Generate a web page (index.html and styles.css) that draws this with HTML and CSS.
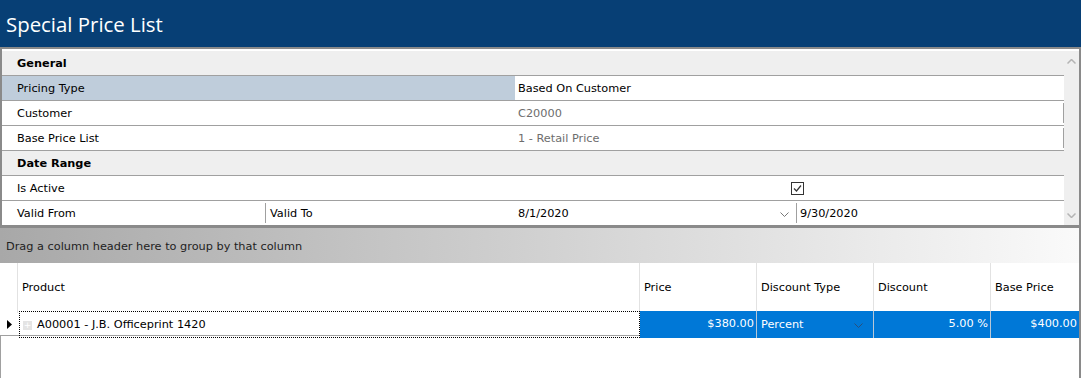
FILE: index.html
```html
<!DOCTYPE html>
<html lang="en">
<head>
    <meta charset="UTF-8">
    <title>Special Price List</title>
    <link rel="stylesheet" href="styles.css">
</head>
<body>
    <div class="titlebar">Special Price List</div>

    <div class="props">
        <div class="props-rows">
            <div class="cat">General</div>
            <div class="row">
                <div class="label selected">Pricing Type</div>
                <div class="value">Based On Customer</div>
            </div>
            <div class="row">
                <div class="label">Customer</div>
                <div class="value readonly">C20000</div>
            </div>
            <div class="row">
                <div class="label">Base Price List</div>
                <div class="value readonly">1 - Retail Price</div>
            </div>
            <div class="cat">Date Range</div>
            <div class="row">
                <div class="label">Is Active</div>
                <div class="value check-cell">
                    <svg class="checkbox" width="13" height="13" viewBox="0 0 13 13">
                        <rect x="0.5" y="0.5" width="12" height="12" fill="#fff" stroke="#333"/>
                        <path d="M3 6.5 L5.5 9 L10 3.5" fill="none" stroke="#333" stroke-width="1.2"/>
                    </svg>
                </div>
            </div>
            <div class="row last">
                <div class="label half">Valid From</div>
                <div class="label half sep">Valid To</div>
                <div class="value date">
                    <span>8/1/2020</span>
                    <svg class="chev" width="9" height="5" viewBox="0 0 9 5">
                        <path d="M0.5 0.5 L4.5 4.5 L8.5 0.5" fill="none" stroke="#777"/>
                    </svg>
                </div>
                <div class="value date-to">9/30/2020</div>
            </div>
        </div>
        <div class="vscroll">
            <svg width="9" height="5" viewBox="0 0 9 5"><path d="M0.5 4.5 L4.5 0.5 L8.5 4.5" fill="none" stroke="#b4b4b4" stroke-width="1.5"/></svg>
            <svg width="9" height="5" viewBox="0 0 9 5"><path d="M0.5 0.5 L4.5 4.5 L8.5 0.5" fill="none" stroke="#b4b4b4" stroke-width="1.5"/></svg>
        </div>
    </div>

    <div class="grid">
        <div class="group-panel">Drag a column header here to group by that column</div>

        <div class="grid-head">
            <div class="col indicator"></div>
            <div class="col">Product</div>
            <div class="col">Price</div>
            <div class="col">Discount Type</div>
            <div class="col">Discount</div>
            <div class="col">Base Price</div>
        </div>

        <div class="grid-row">
            <div class="cell indicator">
                <svg width="5" height="9" viewBox="0 0 5 9"><path d="M0 0 L5 4.5 L0 9 Z" fill="#000"/></svg>
            </div>
            <div class="cell product">
                <span class="expand">+</span>A00001 - J.B. Officeprint 1420
            </div>
            <div class="cell active num">$380.00</div>
            <div class="cell active combo">
                <span>Percent</span>
                <svg width="9" height="5" viewBox="0 0 9 5"><path d="M0.5 0.5 L4.5 4.5 L8.5 0.5" fill="none" stroke="#2a4f7a"/></svg>
            </div>
            <div class="cell active num">5.00 %</div>
            <div class="cell active num">$400.00</div>
        </div>

        <div class="grid-empty"></div>
    </div>
</body>
</html>
```

FILE: styles.css
```css
body {
    margin: 0;
    width: 1081px;
    height: 378px;
    overflow: hidden;
    background-color: #fff;
    font-family: "DejaVu Sans", sans-serif;
    font-size: 11.3px;
    color: #000;
}
.titlebar {
    height: 47px;
    line-height: 49px;
    padding-left: 6px;
    background-color: #073f75;
    color: #fff;
    font-family: "Open Sans", sans-serif;
    font-size: 20.4px;
}

/* property grid */
.props {
    display: flex;
    border: 2px solid #8a8a8a;
    border-bottom-width: 3px;
    padding-top: 2px;
}
.props-rows {
    width: 1062px;
}
.cat {
    height: 24px;
    line-height: 26px;
    padding-left: 15px;
    font-weight: bold;
    background-color: #efefef;
    border-bottom: 1px solid #a0a0a0;
}
.row {
    display: flex;
    height: 24px;
    line-height: 26px;
    border-bottom: 1px solid #a0a0a0;
}
.row.last {
    border-bottom: none;
}
.label {
    width: 498px;
    padding-left: 15px;
}
.label.selected {
    background-color: #bfcddb;
}
.label.half {
    width: 248px;
}
.label.sep {
    width: 245px;
    padding-left: 4px;
    border-left: 1px solid #a0a0a0;
    margin: 2px 0;
    line-height: 22px;
}
.value {
    flex: 1;
    padding-left: 3px;
}
.value.readonly {
    color: #6d6d6d;
    border-right: 1px solid #a0a0a0;
    margin: 2px 0;
    line-height: 22px;
}
.check-cell {
    display: flex;
    align-items: center;
    padding-left: 276px;
}
.value.date {
    flex: none;
    width: 271px;
    display: flex;
    align-items: center;
    justify-content: space-between;
    padding-right: 7px;
    padding-top: 2px;
}
.value.date-to {
    border-left: 1px solid #a0a0a0;
    margin: 2px 0;
    line-height: 22px;
}
.vscroll {
    width: 15px;
    background-color: #efefef;
    display: flex;
    flex-direction: column;
    justify-content: space-between;
    align-items: center;
    padding: 8px 0 7px;
}

/* data grid */
.grid {
    border-right: 2px solid #8a8a8a;
}
.group-panel {
    height: 35px;
    line-height: 37px;
    padding-left: 6px;
    color: #1e1e1e;
    background: linear-gradient(to right, #a8a8a8, #fafafa);
}
.grid-head,
.grid-row {
    display: grid;
    grid-template-columns: 18px 622px 117px 117px 117px 88px;
}
.grid-head {
    height: 48px;
}
.col {
    line-height: 50px;
    padding-left: 4px;
    border-right: 1px solid #e2e2e2;
}
.col:last-child {
    border-right: none;
}
.grid-row {
    height: 24px;
    line-height: 26px;
    border-bottom: 1px solid #a0a0a0;
}
.cell.indicator {
    display: flex;
    align-items: center;
    padding-left: 7px;
}
.cell.product {
    border: 1px dotted #000;
    display: flex;
    align-items: center;
    line-height: 22px;
    padding: 1px 0 0 3px;
    margin-left: 1px;
}
.expand {
    display: inline-block;
    width: 9px;
    height: 9px;
    line-height: 9px;
    margin-right: 5px;
    background-color: #e4e4e4;
    color: #fff;
    font-size: 9px;
    text-align: center;
}
.cell.active {
    background-color: #0078d7;
    color: #fff;
    border-right: 1px solid #b9c7d6;
}
.cell.active:last-child {
    border-right: none;
}
.cell.num {
    text-align: right;
    padding-right: 2px;
}
.cell.combo {
    display: flex;
    align-items: center;
    justify-content: space-between;
    padding: 1px 10px 0 4px;
}
.grid-empty {
    height: 42px;
    border-left: 1px solid #a0a0a0;
}
```
